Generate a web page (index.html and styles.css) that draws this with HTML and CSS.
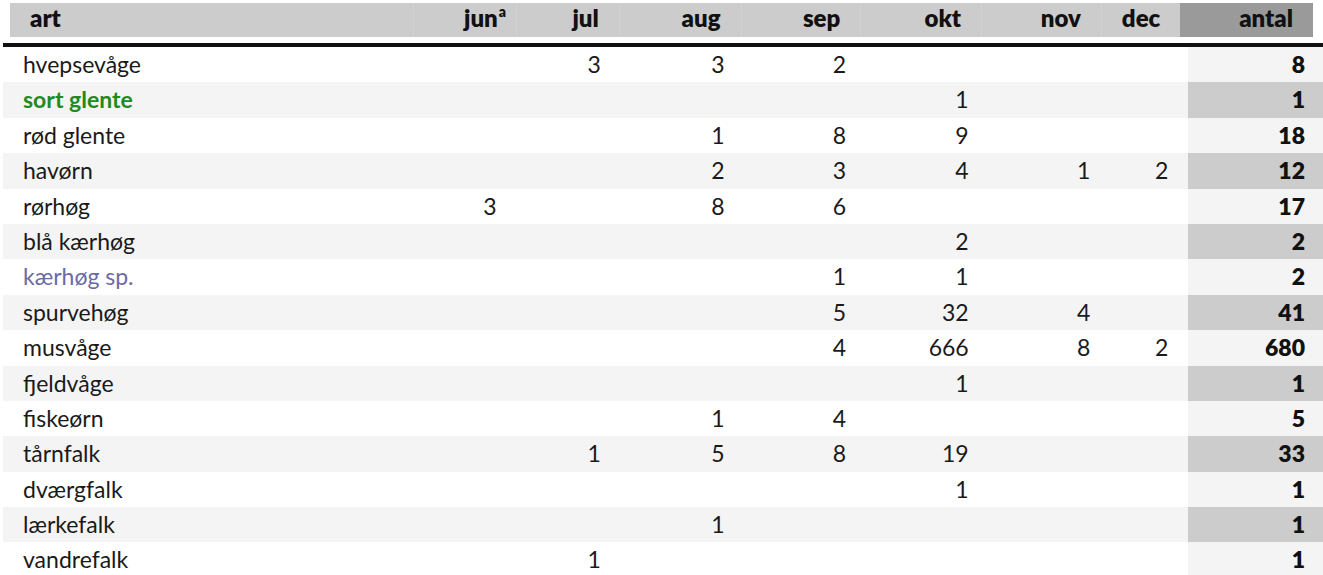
FILE: index.html
```html
<!DOCTYPE html>
<html lang="da">
<head>
<meta charset="utf-8">
<title>Rovfugle</title>
<link rel="stylesheet" href="styles.css">
</head>
<body>
<div class="table">
  <div class="thead">
    <div class="th th-first">art</div>
    <div class="th num">jun<sup class="fn">a</sup></div>
    <div class="th num">jul</div>
    <div class="th num">aug</div>
    <div class="th num">sep</div>
    <div class="th num">okt</div>
    <div class="th num">nov</div>
    <div class="th num">dec</div>
    <div class="th num th-total">antal</div>
  </div>
  <div class="tbody">
    <div class="tr"><div class="td name">hvepsevåge</div><div class="td"></div><div class="td">3</div><div class="td">3</div><div class="td">2</div><div class="td"></div><div class="td"></div><div class="td"></div><div class="td total">8</div></div>
    <div class="tr"><div class="td name green">sort glente</div><div class="td"></div><div class="td"></div><div class="td"></div><div class="td"></div><div class="td">1</div><div class="td"></div><div class="td"></div><div class="td total">1</div></div>
    <div class="tr"><div class="td name">rød glente</div><div class="td"></div><div class="td"></div><div class="td">1</div><div class="td">8</div><div class="td">9</div><div class="td"></div><div class="td"></div><div class="td total">18</div></div>
    <div class="tr"><div class="td name">havørn</div><div class="td"></div><div class="td"></div><div class="td">2</div><div class="td">3</div><div class="td">4</div><div class="td">1</div><div class="td">2</div><div class="td total">12</div></div>
    <div class="tr"><div class="td name">rørhøg</div><div class="td">3</div><div class="td"></div><div class="td">8</div><div class="td">6</div><div class="td"></div><div class="td"></div><div class="td"></div><div class="td total">17</div></div>
    <div class="tr"><div class="td name">blå kærhøg</div><div class="td"></div><div class="td"></div><div class="td"></div><div class="td"></div><div class="td">2</div><div class="td"></div><div class="td"></div><div class="td total">2</div></div>
    <div class="tr"><div class="td name blue">kærhøg sp.</div><div class="td"></div><div class="td"></div><div class="td"></div><div class="td">1</div><div class="td">1</div><div class="td"></div><div class="td"></div><div class="td total">2</div></div>
    <div class="tr"><div class="td name">spurvehøg</div><div class="td"></div><div class="td"></div><div class="td"></div><div class="td">5</div><div class="td">32</div><div class="td">4</div><div class="td"></div><div class="td total">41</div></div>
    <div class="tr"><div class="td name">musvåge</div><div class="td"></div><div class="td"></div><div class="td"></div><div class="td">4</div><div class="td">666</div><div class="td">8</div><div class="td">2</div><div class="td total">680</div></div>
    <div class="tr"><div class="td name">fjeldvåge</div><div class="td"></div><div class="td"></div><div class="td"></div><div class="td"></div><div class="td">1</div><div class="td"></div><div class="td"></div><div class="td total">1</div></div>
    <div class="tr"><div class="td name">fiskeørn</div><div class="td"></div><div class="td"></div><div class="td">1</div><div class="td">4</div><div class="td"></div><div class="td"></div><div class="td"></div><div class="td total">5</div></div>
    <div class="tr"><div class="td name">tårnfalk</div><div class="td"></div><div class="td">1</div><div class="td">5</div><div class="td">8</div><div class="td">19</div><div class="td"></div><div class="td"></div><div class="td total">33</div></div>
    <div class="tr"><div class="td name">dværgfalk</div><div class="td"></div><div class="td"></div><div class="td"></div><div class="td"></div><div class="td">1</div><div class="td"></div><div class="td"></div><div class="td total">1</div></div>
    <div class="tr"><div class="td name">lærkefalk</div><div class="td"></div><div class="td"></div><div class="td">1</div><div class="td"></div><div class="td"></div><div class="td"></div><div class="td"></div><div class="td total">1</div></div>
    <div class="tr"><div class="td name">vandrefalk</div><div class="td"></div><div class="td">1</div><div class="td"></div><div class="td"></div><div class="td"></div><div class="td"></div><div class="td"></div><div class="td total">1</div></div>
  </div>
</div>
</body>
</html>
```

FILE: styles.css
```css
html, body {
  margin: 0;
  padding: 0;
  background: #ffffff;
}

body {
  font-family: "Lato", "Open Sans", sans-serif;
  color: #111111;
  overflow: hidden;
}

.table {
  width: 1323px;
}

.thead,
.tr {
  display: grid;
  grid-template-columns: 404fr 103fr 103fr 122fr 120fr 121fr 120fr 77fr 133fr;
}

.thead {
  margin: 3px 10px 0 10px;
  height: 34px;
  background: #cccccc;
}

.th {
  font-weight: 800;
  font-size: 24px;
  line-height: 30px;
  padding: 0 20px;
  color: #111111;
  border-left: 1px solid #d3d3d3;
}

.th-first {
  border-left: none;
}

.num {
  text-align: right;
}

.th-total {
  background: #9a9a9a;
  border-left: none;
}

.fn {
  font-size: 14px;
  line-height: 0;
  vertical-align: 10px;
  margin-right: -10px;
  margin-left: 1px;
}

.tbody {
  margin: 6px 0 0 3px;
  border-top: 4px solid #111111;
}

.tr {
  height: 35.4px;
  background: #ffffff;
}

.tr:nth-child(even) {
  background: #f4f4f4;
}

.td {
  font-size: 23px;
  line-height: 34px;
  padding: 0 20px;
  text-align: right;
  color: #1a1a1a;
}

.td.name {
  text-align: left;
  padding-left: 20px;
}

.green {
  color: #1f8a1f;
  font-weight: 700;
}

.blue {
  color: #6a6aa4;
}

.total {
  font-weight: 800;
  background: #f4f4f4;
  padding-right: 18px;
  color: #111111;
}

.tr:nth-child(even) .total {
  background: #cccccc;
}
```
